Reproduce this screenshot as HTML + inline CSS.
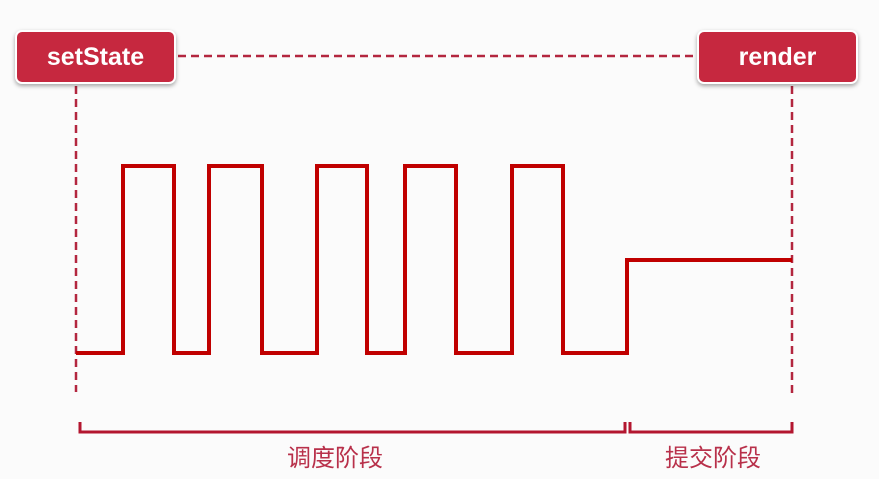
<!DOCTYPE html>
<html><head><meta charset="utf-8"><style>
html,body{margin:0;padding:0;background:#fbfbfb;width:879px;height:479px;overflow:hidden}
.box{position:absolute;top:30px;width:161px;height:54px;background:#c6283f;border:2px solid #fff;border-radius:7px;box-shadow:0 2px 4px rgba(0,0,0,.35);color:#fff;font:bold 25px "Liberation Sans",sans-serif;display:flex;align-items:center;justify-content:center;box-sizing:border-box}
.lbl{position:absolute;top:438px;font:24px "Liberation Sans","Noto Sans CJK SC",sans-serif;color:#b8304a}
</style></head><body>
<svg width="879" height="479" style="position:absolute;left:0;top:0">
<g stroke="#b3263f" stroke-width="2.5" stroke-dasharray="8,5" fill="none">
<line x1="178" y1="56" x2="697" y2="56"/>
<line x1="76" y1="86" x2="76" y2="392"/>
<line x1="792" y1="86" x2="792" y2="395"/>
</g>
<polyline fill="none" stroke="#c00000" stroke-width="4" stroke-linejoin="miter" points="76,353 123,353 123,166 174,166 174,353 209,353 209,166 262,166 262,353 317,353 317,166 367,166 367,353 405,353 405,166 456,166 456,353 512,353 512,166 563,166 563,353 627,353 627,260 792,260"/>
<g fill="none" stroke="#b3162f" stroke-width="3">
<polyline points="80,422 80,432 625,432 625,422"/>
<polyline points="630,422 630,432 792,432 792,422"/>
</g>
</svg>
<div class="box" style="left:15px">setState</div>
<div class="box" style="left:697px">render</div>
<div class="lbl" style="left:287px">调度阶段</div>
<div class="lbl" style="left:665px">提交阶段</div>
</body></html>
